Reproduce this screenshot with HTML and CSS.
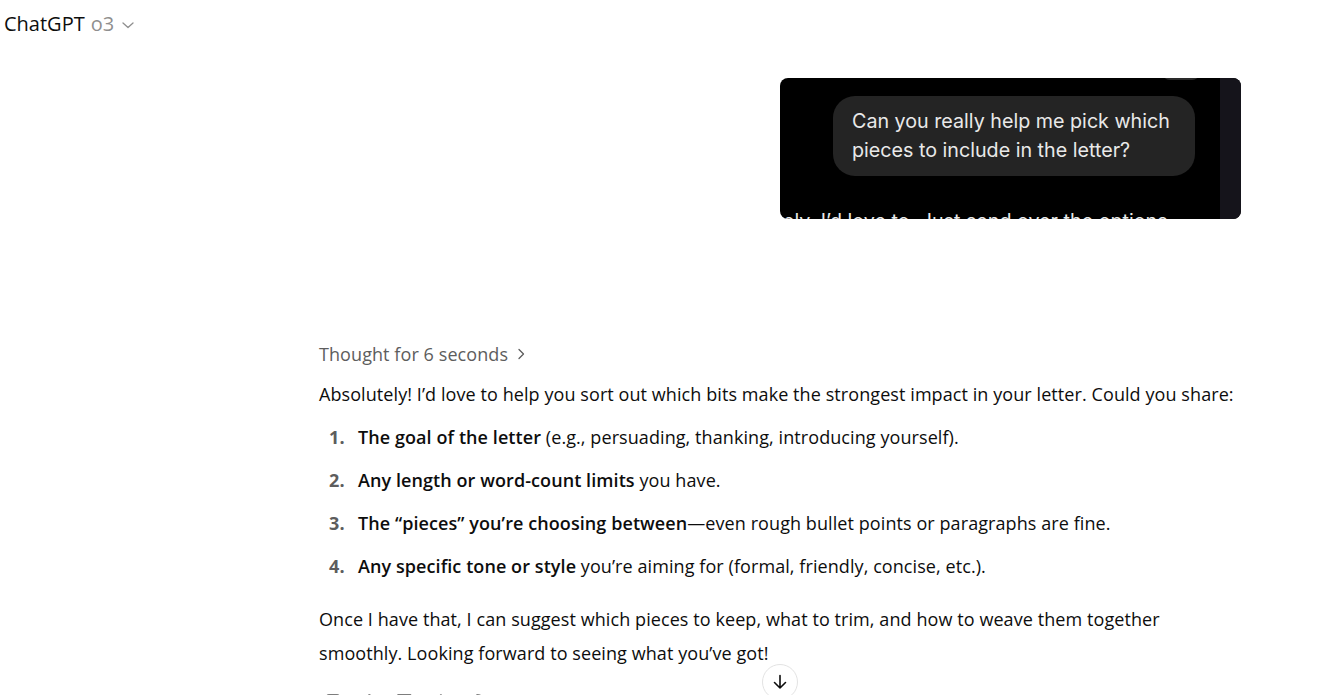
FILE: index.html
```html
<!DOCTYPE html>
<html lang="en">
<head>
    <meta charset="UTF-8">
    <meta name="viewport" content="width=device-width, initial-scale=1.0">
    <title>ChatGPT</title>
    <link rel="stylesheet" href="styles.css">
</head>
<body>

    <header class="topbar">
        <span class="model-name">ChatGPT</span>
        <span class="model-version">o3</span>
        <svg class="chevron" width="16" height="16" viewBox="0 0 16 16" fill="none" stroke="#8f8f8f" stroke-width="1.3" stroke-linecap="round" stroke-linejoin="round">
            <path d="M3 6 L8 10.5 L13 6"/>
        </svg>
    </header>

    <main class="main">
        <div class="thread">

            <!-- user message: attached screenshot -->
            <div class="user-turn">
                <div class="shot">
                    <div class="shot-screen">
                        <div class="shot-cut-bubble"></div>
                        <div class="shot-bubble">Can you really help me pick which pieces to include in the letter?</div>
                        <div class="shot-reply">ely. I’d love to. Just send over the options</div>
                    </div>
                    <div class="shot-edge"></div>
                </div>
            </div>

            <!-- assistant reply -->
            <div class="assistant-turn">
                <div class="thought">
                    Thought for 6 seconds
                    <svg width="14" height="14" viewBox="0 0 14 14" fill="none" stroke="#5d5d5d" stroke-width="1.3" stroke-linecap="round" stroke-linejoin="round">
                        <path d="M5 2.5 L9.5 7 L5 11.5"/>
                    </svg>
                </div>

                <p>Absolutely! I’d love to help you sort out which bits make the strongest impact in your letter. Could you share:</p>

                <ol>
                    <li><strong>The goal of the letter</strong> (e.g., persuading, thanking, introducing yourself).</li>
                    <li><strong>Any length or word-count limits</strong> you have.</li>
                    <li><strong>The “pieces” you’re choosing between</strong>—even rough bullet points or paragraphs are fine.</li>
                    <li><strong>Any specific tone or style</strong> you’re aiming for (formal, friendly, concise, etc.).</li>
                </ol>

                <p>Once I have that, I can suggest which pieces to keep, what to trim, and how to weave them together smoothly. Looking forward to seeing what you’ve got!</p>

                <div class="actions">
                    <!-- copy -->
                    <svg width="20" height="20" viewBox="0 0 20 20" fill="none" stroke="#7d7d7d" stroke-width="1.5">
                        <rect x="4" y="0.8" width="12" height="12" rx="2"/>
                        <rect x="1" y="5" width="11" height="12" rx="2"/>
                    </svg>
                    <!-- thumbs up -->
                    <svg width="20" height="20" viewBox="0 0 20 20" fill="none" stroke="#7d7d7d" stroke-width="1.5" stroke-linejoin="round">
                        <path d="M10 0.8 L7 7 H3 V17 H14.5 L17 8.5 H11.5 L12 3 Q11.5 0.8 10 0.8 Z"/>
                    </svg>
                    <!-- thumbs down -->
                    <svg width="20" height="20" viewBox="0 0 20 20" fill="none" stroke="#7d7d7d" stroke-width="1.5" stroke-linejoin="round">
                        <path d="M4 0.8 H15.5 L17.5 9 H12 L12.5 15 Q12 17 10.5 17 L7.5 11 H3 V0.8 Z"/>
                    </svg>
                    <!-- read aloud -->
                    <svg width="20" height="20" viewBox="0 0 20 20" fill="none" stroke="#7d7d7d" stroke-width="1.5" stroke-linejoin="round">
                        <path d="M10 0.8 L5 6 H2 V13 H5 L10 18 Z"/>
                    </svg>
                    <!-- regenerate -->
                    <svg width="20" height="20" viewBox="0 0 20 20" fill="none" stroke="#7d7d7d" stroke-width="1.5" stroke-linecap="round">
                        <path d="M10 0.8 A8 8 0 1 1 3 5"/>
                    </svg>
                </div>
            </div>

        </div>

        <button class="scroll-down" aria-label="Scroll down">
            <svg width="20" height="20" viewBox="0 0 20 20" fill="none" stroke="#0d0d0d" stroke-width="1.6" stroke-linecap="round" stroke-linejoin="round">
                <path d="M10 3.5 V16 M4.5 10.5 L10 16 L15.5 10.5"/>
            </svg>
        </button>
    </main>

</body>
</html>
```

FILE: styles.css
```css
html, body {
    height: 100%;
}

body {
    margin: 0;
    font-family: 'Open Sans', 'Noto Sans', sans-serif;
    color: #0d0d0d;
    background-color: #ffffff;
    overflow: hidden;
}

.topbar {
    display: flex;
    align-items: center;
    gap: 6px;
    height: 46px;
    padding-left: 4px;
    font-size: 20px;
}

.model-version {
    color: #8f8f8f;
}

.chevron {
    margin-top: 3px;
}

.main {
    padding-left: 225px;
}

.thread {
    width: 922px;
    margin: 0 auto;
}

.user-turn {
    display: flex;
    justify-content: flex-end;
    padding-top: 32px;
}

.shot {
    display: flex;
    width: 461px;
    height: 141px;
    border-radius: 8px;
    overflow: hidden;
    background-color: #000;
}

.shot-screen {
    position: relative;
    flex: 1;
    font-family: 'Inter', 'Liberation Sans', sans-serif;
    color: #e9e9e9;
}

.shot-edge {
    width: 21px;
    background-color: #15141b;
}

.shot-cut-bubble {
    position: absolute;
    top: -14px;
    right: 20px;
    width: 38px;
    height: 16px;
    border-radius: 8px;
    background-color: #2a2a2a;
}

.shot-bubble {
    position: absolute;
    top: 18px;
    left: 53px;
    width: 324px;
    padding: 11px 19px;
    border-radius: 22px;
    background-color: #242424;
    font-size: 19.7px;
    line-height: 29px;
}

.shot-reply {
    position: absolute;
    top: 131px;
    left: 3px;
    white-space: nowrap;
    font-size: 19.7px;
}

.assistant-turn {
    padding-top: 118px;
    font-size: 18px;
    letter-spacing: 0.08px;
    line-height: 34px;
}

.assistant-turn strong {
    font-weight: 600;
}

.thought {
    display: flex;
    align-items: center;
    gap: 6px;
    color: #5d5d5d;
    margin-bottom: 6px;
}

.assistant-turn p {
    margin: 0 0 9px;
}

.assistant-turn ol {
    margin: 0 0 19px;
    padding-left: 39px;
    list-style: none;
    counter-reset: item;
}

.assistant-turn li {
    counter-increment: item;
    margin-bottom: 9px;
}

.assistant-turn li::before {
    content: counter(item) ".";
    display: inline-block;
    width: 29px;
    margin-left: -29px;
    font-weight: 700;
    color: #5d5d5d;
}

.actions {
    display: flex;
    gap: 16px;
    padding-top: 15px;
    padding-left: 4px;
}

.scroll-down {
    position: absolute;
    left: 762px;
    top: 664px;
    width: 36px;
    height: 36px;
    display: flex;
    align-items: center;
    justify-content: center;
    padding: 0;
    border: 1px solid #e3e3e3;
    border-radius: 50%;
    background-color: #ffffff;
    cursor: pointer;
}
```
